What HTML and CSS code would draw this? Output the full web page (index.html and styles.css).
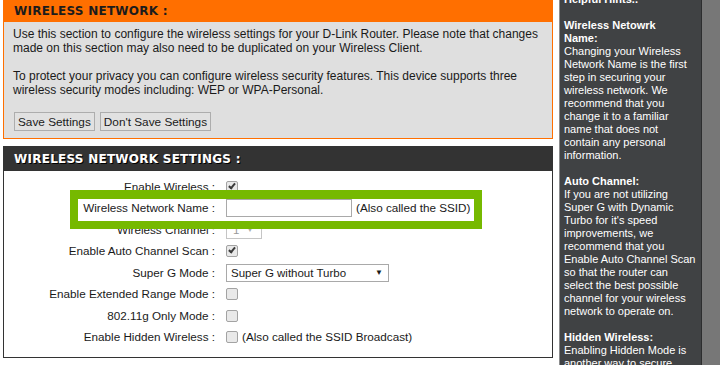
FILE: index.html
```html
<!DOCTYPE html>
<html>
<head>
  <meta charset="utf-8">
  <title>Wireless Network</title>
  <link rel="stylesheet" href="styles.css">
</head>
<body>
  <div id="page">
    <div id="content">
      <div class="box box-orange">
        <h2 class="box-title">WIRELESS NETWORK :</h2>
        <div class="box-body">
          <p>Use this section to configure the wireless settings for your D-Link Router. Please note that changes<br>made on this section may also need to be duplicated on your Wireless Client.</p>
          <p>To protect your privacy you can configure wireless security features. This device supports three<br>wireless security modes including: WEP or WPA-Personal.</p>
          <div class="buttons">
            <button type="button">Save Settings</button>
            <button type="button">Don't Save Settings</button>
          </div>
        </div>
      </div>

      <div class="box box-dark">
        <h2 class="box-title">WIRELESS NETWORK SETTINGS :</h2>
        <div class="box-body form">
          <label>Enable Wireless :</label>
          <div class="field"><span class="check on"></span></div>

          <label>Wireless Network Name :</label>
          <div class="field"><input class="text" type="text"><span class="note">(Also called the SSID)</span></div>

          <label>Wireless Channel :</label>
          <div class="field"><span class="select select-off">1</span></div>

          <label>Enable Auto Channel Scan :</label>
          <div class="field"><span class="check on"></span></div>

          <label>Super G Mode :</label>
          <div class="field"><span class="select select-wide">Super G without Turbo</span></div>

          <label>Enable Extended Range Mode :</label>
          <div class="field"><span class="check"></span></div>

          <label>802.11g Only Mode :</label>
          <div class="field"><span class="check"></span></div>

          <label>Enable Hidden Wireless :</label>
          <div class="field"><span class="check"></span><span class="note">(Also called the SSID Broadcast)</span></div>
        </div>
      </div>
    </div>

    <div id="hints">
      <p><b>Helpful Hints..</b></p>
      <p><b>Wireless Netowrk<br>Name:</b><br>Changing your Wireless<br>Network Name is the first<br>step in securing your<br>wireless network. We<br>recommend that you<br>change it to a familiar<br>name that does not<br>contain any personal<br>information.</p>
      <p><b>Auto Channel:</b><br>If you are not utilizing<br>Super G with Dynamic<br>Turbo for it's speed<br>improvements, we<br>recommend that you<br>Enable Auto Channel Scan<br>so that the router can<br>select the best possible<br>channel for your wireless<br>network to operate on.</p>
      <p><b>Hidden Wireless:</b><br>Enabling Hidden Mode is<br>another way to secure</p>
    </div>
    <div id="gutter"></div>
  </div>

  <!-- highlight drawn over the ssid row -->
  <div class="callout"></div>
</body>
</html>
```

FILE: styles.css
```css
*, *:before, *:after { box-sizing: border-box; }
html, body { height: 100%; }
body {
  margin: 0;
  padding: 0;
  font-family: "Liberation Sans", Arial, sans-serif;
  font-size: 12px;
  line-height: 14px;
  color: #1a1a1a;
  background-color: #fff;
  overflow: hidden;
}
p { margin: 0; }

#page { display: flex; height: 100%; }
#content { width: 550px; margin-left: 3px; flex: 0 0 auto; }

/* boxes */
.box-title {
  margin: 0;
  font-family: "DejaVu Sans", Verdana, sans-serif;
  font-size: 12px;
  font-weight: bold;
  letter-spacing: 0.25px;
  white-space: nowrap;
}
.box-orange {
  border: 1px solid #ff6f00;
  border-top: 0;
  background-color: #dfdfdf;
}
.box-orange .box-title {
  height: 22px;
  line-height: 22px;
  padding-left: 11px;
  margin: 0 -1px;
  background-color: #ff6f00;
  color: #1c1c1c;
}
.box-orange .box-body { padding: 5px 9px 7px; }
.box-orange p { white-space: nowrap; }
.box-orange p + p { margin-top: 14px; }

.buttons { display: flex; gap: 5px; margin-top: 15px; margin-left: 1px; }
.buttons button {
  height: 19px;
  padding: 0 3px;
  font-family: inherit;
  font-size: 11.8px;
  color: #1a1a1a;
  background-color: #e1e1e1;
  border: 1px solid #adadad;
  border-radius: 0;
}

.box-dark { margin-top: 7px; }
.box-dark .box-title {
  height: 25px;
  line-height: 26px;
  padding-left: 11px;
  background-color: #333;
  color: #fff;
  text-shadow: 1px 1px 0 #000, 0 0 1px #555;
}

/* form rows */
.form {
  display: grid;
  grid-template-columns: 211px 1fr;
  grid-auto-rows: 21.5px;
  column-gap: 11px;
  padding: 5px 0 9px;
  border: 1px solid #333;
  border-top: 0;
  background-color: #fff;
  font-size: 11.7px;
}
.form label {
  display: flex;
  align-items: center;
  justify-content: flex-end;
  white-space: nowrap;
}
.field { display: flex; align-items: center; gap: 5px; white-space: nowrap; }

.check {
  position: relative;
  width: 12px;
  height: 12px;
  border: 1px solid #a3a3a3;
  border-radius: 2px;
  background-color: #e9e9e9;
}
.check.on:after {
  content: "";
  position: absolute;
  left: 3px;
  top: 0px;
  width: 4px;
  height: 7px;
  border: solid #3a3a3a;
  border-width: 0 2px 2px 0;
  transform: rotate(40deg);
}

.text {
  width: 126px;
  height: 18px;
  margin: 0;
  border: 1px solid #a9a9a9;
  background-color: #fff;
  padding: 0 3px;
}
.note { margin-left: -1px; }

.select {
  position: relative;
  height: 18px;
  line-height: 16px;
  padding-left: 4px;
  border: 1px solid #a9a9a9;
  background-color: #fff;
  font-size: 11.5px;
}
.select:after {
  content: "\25BC";
  position: absolute;
  right: 5px;
  top: 0;
  font-size: 8px;
}
.select-off { width: 36px; color: #999; padding-left: 6px; border-color: #c5c5c5; }
.select-off:after { color: #aaa; right: 7px; }
.select-wide { width: 163px; }

/* sidebar */
#hints {
  flex: 0 0 143px;
  margin-left: 6px;
  padding: 0 0 0 4px;
  background-color: #404244;
  border-left: 1px solid #8b8c8d;
  border-right: 1px solid #2c2d2e;
  color: #fff;
  font-size: 11px;
  line-height: 13px;
  white-space: nowrap;
}
#hints p:first-child { margin-top: -7px; }
#hints p + p { margin-top: 13px; }
#gutter { flex: 1; background-color: #777; }

/* annotation frame */
.callout {
  position: absolute;
  left: 70px;
  top: 190px;
  width: 412px;
  height: 39px;
  border: 8px solid #76b900;
  border-top-width: 9px;
}
```
